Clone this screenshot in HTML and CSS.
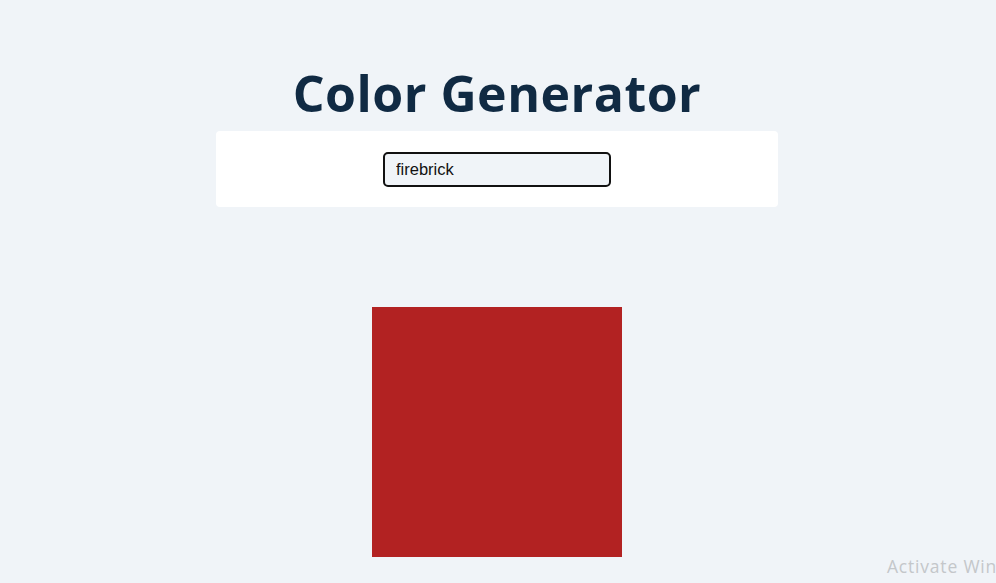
FILE: index.html
```html
<!DOCTYPE html>
<html lang="en">
<head>
<meta charset="utf-8">
<title>Color Generator</title>
<link rel="stylesheet" href="styles.css">
</head>
<body>
<main class="page">
  <h1 class="title">Color Generator</h1>
  <section class="panel">
    <input class="color-input" type="text" value="firebrick">
  </section>
  <div class="swatch" style="background-color: firebrick;"></div>
</main>
<div class="watermark">Activate Windows</div>
</body>
</html>
```
FILE: styles.css
```css
html, body {
  margin: 0;
  padding: 0;
  background: #f0f4f8;
  height: 100%;
  overflow: hidden;
}
.page {
  display: flex;
  flex-direction: column;
  align-items: center;
  padding-top: 62px;
  padding-right: 2px;
}
.title {
  margin: 0;
  font-family: "Open Sans", "Noto Sans", sans-serif;
  font-weight: 700;
  font-size: 50px;
  line-height: 62px;
  letter-spacing: 0.5px;
  color: #102a43;
}
.panel {
  margin-top: 7px;
  width: 562px;
  height: 76px;
  background: #ffffff;
  border-radius: 4px;
  display: flex;
  align-items: center;
  justify-content: center;
}
.color-input {
  box-sizing: border-box;
  width: 228px;
  height: 35px;
  border: 2px solid #111;
  border-radius: 5px;
  background: #f0f4f8;
  padding: 0 11px;
  font-family: "Liberation Sans", Arial, sans-serif;
  font-size: 16.5px;
  color: #111;
  outline: none;
}
.swatch {
  margin-top: 100px;
  width: 250px;
  height: 250px;
}
.watermark {
  position: absolute;
  left: 887px;
  top: 554px;
  font-family: "Open Sans", "Noto Sans", sans-serif;
  font-size: 17.5px;
  letter-spacing: 0.8px;
  color: #c4c7ca;
  white-space: nowrap;
}
```
